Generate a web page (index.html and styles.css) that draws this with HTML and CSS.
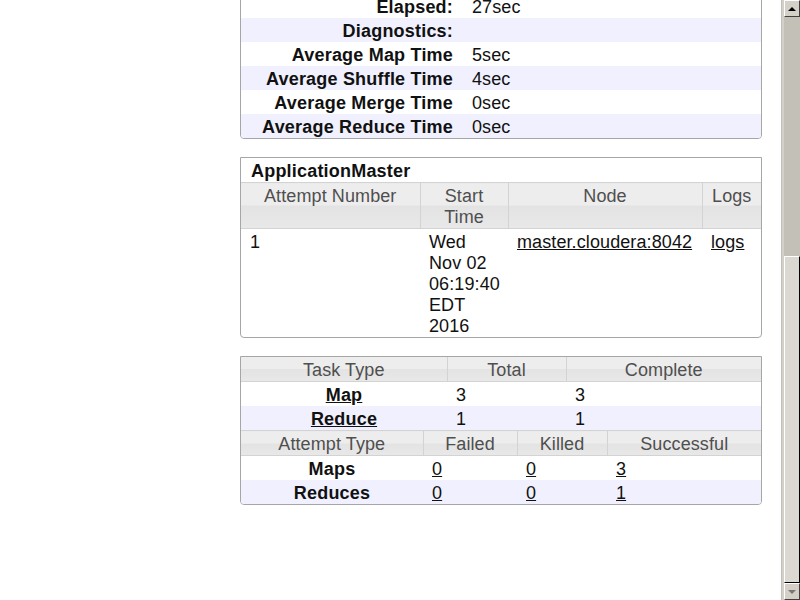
FILE: index.html
```html
<!DOCTYPE html>
<html>
<head>
<meta charset="utf-8">
<link rel="stylesheet" href="styles.css">
</head>
<body>
<div class="page">
  <div class="content">
    <div class="box first">
      <table class="info">
        <tr><th>Elapsed:</th><td>27sec</td></tr>
        <tr class="even"><th>Diagnostics:</th><td></td></tr>
        <tr><th>Average Map Time</th><td>5sec</td></tr>
        <tr class="even"><th>Average Shuffle Time</th><td>4sec</td></tr>
        <tr><th>Average Merge Time</th><td>0sec</td></tr>
        <tr class="even"><th>Average Reduce Time</th><td>0sec</td></tr>
      </table>
    </div>

    <div class="box">
      <div class="caption">ApplicationMaster</div>
      <table class="grid">
        <colgroup><col class="c179"><col class="c88"><col class="c194"><col class="c59"></colgroup>
        <thead>
          <tr class="head top"><th>Attempt Number</th><th>Start Time</th><th>Node</th><th>Logs</th></tr>
        </thead>
        <tbody>
          <tr class="data"><td>1</td><td>Wed Nov 02 06:19:40 EDT 2016</td><td><a href="#">master.cloudera:8042</a></td><td><a href="#">logs</a></td></tr>
        </tbody>
      </table>
    </div>

    <div class="box">
      <table class="grid">
        <colgroup><col class="c206"><col class="c119"><col class="c195"></colgroup>
        <tr class="head"><th>Task Type</th><th>Total</th><th>Complete</th></tr>
        <tr class="data"><th class="rowh"><a href="#">Map</a></th><td>3</td><td>3</td></tr>
        <tr class="data even"><th class="rowh"><a href="#">Reduce</a></th><td>1</td><td>1</td></tr>
      </table>
      <table class="grid">
        <colgroup><col class="c182"><col class="c94"><col class="c90"><col class="c154"></colgroup>
        <tr class="head top"><th>Attempt Type</th><th>Failed</th><th>Killed</th><th>Successful</th></tr>
        <tr class="data"><th class="rowh">Maps</th><td><a href="#">0</a></td><td><a href="#">0</a></td><td><a href="#">3</a></td></tr>
        <tr class="data even"><th class="rowh">Reduces</th><td><a href="#">0</a></td><td><a href="#">0</a></td><td><a href="#">1</a></td></tr>
      </table>
    </div>
  </div>

  <div class="scrollbar">
    <div class="sb-btn"><span class="tri up"></span></div>
    <div class="sb-track"></div>
    <div class="sb-thumb"></div>
    <div class="sb-btn"><span class="tri down"></span></div>
  </div>
</div>
</body>
</html>
```

FILE: styles.css
```css
html, body {
  margin: 0;
  padding: 0;
  background: #fff;
  overflow: hidden;
}
body {
  font-family: "Liberation Sans", Arial, sans-serif;
  font-size: 18px;
  line-height: 21px;
  letter-spacing: 0.1px;
  color: #111;
}
th {
  letter-spacing: 0.2px;
}
.page {
  position: relative;
  width: 800px;
  height: 600px;
  overflow: hidden;
}
.content {
  margin-left: 240px;
  width: 522px;
}
.box {
  border: 1px solid #a6a6a6;
  border-radius: 0 0 4px 4px;
  margin-bottom: 18px;
  overflow: hidden;
}
.box.first {
  margin-top: -7px;
  margin-bottom: 18px;
}
table {
  border-collapse: collapse;
  width: 520px;
  table-layout: fixed;
}
.info th {
  width: 202px;
  text-align: right;
  font-weight: bold;
  padding: 3px 10px 0 10px;
}
.info td {
  padding: 3px 9px 0 9px;
}
tr.even td, tr.even th {
  background: #f0f0ff;
}
.caption {
  font-weight: bold;
  letter-spacing: 0.2px;
  padding: 3px 10px 0 10px;
}
.c179 { width: 179px; }
.c88 { width: 88px; }
.c194 { width: 194px; }
.c59 { width: 59px; }
.c206 { width: 206px; }
.c119 { width: 119px; }
.c195 { width: 195px; }
.c182 { width: 182px; }
.c94 { width: 94px; }
.c90 { width: 90px; }
.c154 { width: 154px; }

.grid .head th {
  font-weight: normal;
  letter-spacing: 0.1px;
  color: #4f4f4f;
  text-align: center;
  background: linear-gradient(#ededed 0, #ededed 50%, #e3e3e3 50%, #e8e8e8 100%);
  border-right: 1px solid #d3d3d3;
  border-bottom: 1px solid #d3d3d3;
  padding: 3px 4px 0 4px;
  vertical-align: top;
}
.grid .head.top th {
  border-top: 1px solid #d3d3d3;
}
.grid .head th:last-child {
  border-right: none;
}
.grid .data td {
  padding: 3px 9px 0 9px;
  text-align: left;
  vertical-align: top;
}
.grid .data th.rowh {
  font-weight: bold;
  text-align: center;
  padding: 3px 4px 0 4px;
}
a {
  color: #111;
  text-decoration: underline;
}

.scrollbar {
  position: absolute;
  top: 0;
  left: 781px;
  width: 19px;
  height: 600px;
  display: flex;
  flex-direction: column;
  background: #d4d0c8;
  box-sizing: border-box;
  padding-left: 2px;
  border-left: 1px solid #c0c0c0;
}
.sb-btn {
  height: 17px;
  flex: none;
  box-sizing: border-box;
  background: #d4d0c8;
  border: 1px solid;
  border-color: #fff #404040 #404040 #fff;
  display: flex;
  align-items: center;
  justify-content: center;
}
.sb-track {
  height: 239px;
  flex: none;
  background: #c3c0b8;
}
.sb-thumb {
  height: 327px;
  flex: none;
  box-sizing: border-box;
  background: #dbd8d1;
  border: 1px solid;
  border-color: #fff #000 #000 #fff;
}
.tri {
  width: 0;
  height: 0;
  border-left: 4px solid transparent;
  border-right: 4px solid transparent;
}
.tri.up {
  border-bottom: 4px solid #000;
}
.tri.down {
  border-top: 4px solid #777;
}
```
